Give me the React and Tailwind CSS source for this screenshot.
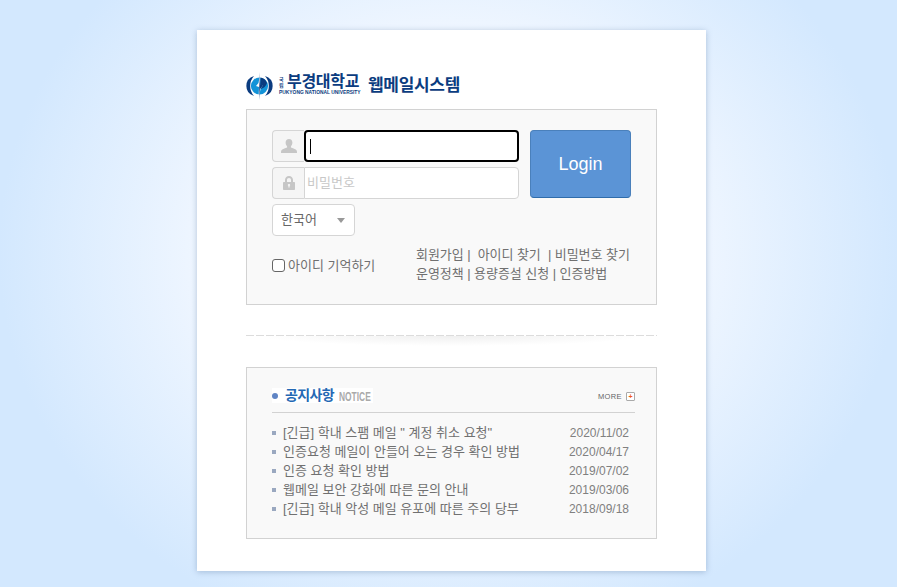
const KR = "font-['Liberation_Sans','Noto_Sans_CJK_KR',sans-serif]";

const notices = [
  { title: '[긴급] 학내 스팸 메일 " 계정 취소 요청"', date: "2020/11/02" },
  { title: "인증요청 메일이 안들어 오는 경우 확인 방법", date: "2020/04/17" },
  { title: "인증 요청 확인 방법", date: "2019/07/02" },
  { title: "웹메일 보안 강화에 따른 문의 안내", date: "2019/03/06" },
  { title: "[긴급] 학내 악성 메일 유포에 따른 주의 당부", date: "2018/09/18" },
];

// university emblem
const Logo = () => (
  <svg width="29" height="28" viewBox="0 0 29 28" className="-ml-px shrink-0">
    <path d="M9 4 A11 10.5 0 0 0 9 24 A15 15 0 0 1 9 4Z" fill="#0b3c80" />
    <path d="M20 4 A11 10.5 0 0 1 20 24 A15 15 0 0 0 20 4Z" fill="#0b3c80" />
    <circle cx="14.5" cy="14" r="8.6" fill="#1293d8" />
    <path d="M15.5 0 L13.5 11 L11 14 L14 15 L13.5 28 L15.5 17 L18 13.5 L15 12.5Z" fill="#fff" />
    <path d="M14.5 0 L15 12 L18 13.5 L15 17 L14.5 28 L14.2 15.5 L14.5 10Z" fill="#0b3c80" />
    <path d="M15.2 12.6 L18 13.5 L15.4 17 A8.6 8.6 0 0 0 22 11 A8.6 8.6 0 0 0 15.6 5.5Z" fill="#0b3c80" />
  </svg>
);

const UserIcon = () => (
  <svg width="16" height="14" viewBox="0 0 16 14" fill="#c6c6c6">
    <path d="M8 0c2.2 0 3.4 1.6 3.4 3.6 0 1.6-.7 3-1.5 3.8v1.2c1.6.6 5.1 1.5 5.8 2.8.2.5.3 1.5.3 2.6H0c0-1.100.1-2.100.3-2.600.7-1.300 4.200-2.200 5.800-2.800V7.400C5.300 6.600 4.600 5.200 4.600 3.600 4.600 1.600 5.800 0 8 0Z" />
  </svg>
);

const LockIcon = () => (
  <svg width="12" height="14" viewBox="0 0 12 14" fill="#c6c6c6">
    <path d="M6 0C3.500 0 2 1.700 2 4v2H.8C.3 6 0 6.300 0 6.800v6.400c0 .5.300.8.800.8h10.400c.5 0 .8-.3.800-.8V6.800c0-.5-.3-.8-.8-.8H10V4c0-2.300-1.500-4-4-4Zm0 2c1.300 0 2 .8 2 2.100V6H4V4.100C4 2.800 4.700 2 6 2ZM6 8c.7 0 1.200.5 1.200 1.100 0 .4-.2.800-.6 1v1.400H5.400v-1.400c-.4-.2-.6-.6-.6-1C4.800 8.500 5.300 8 6 8Z" />
  </svg>
);

const App = () => {
  return (
    <div className={`${KR} h-screen overflow-hidden bg-[radial-gradient(ellipse_450px_400px_at_50%_43%,#ffffff_0%,#eff6ff_55%,#d3e8fe_100%)] pt-[30px]`}>
      <div className="ml-[197px] h-[541px] w-[509px] bg-white px-[49px] pt-[42px] shadow-[0_1px_6px_rgba(90,120,160,0.4)]">
        {/* Logo */}
        <div className="flex h-[37px] items-start">
          <Logo />
          <div className="ml-[5px] flex w-[88px] flex-col pt-[2px]">
            <div className="flex items-center leading-none">
              <div className="flex w-[8px] flex-col text-[5px] font-bold leading-[6px] text-[#0b3c80]">
                <span>국</span>
                <span>립</span>
              </div>
              <span className="whitespace-nowrap text-[16px] font-bold leading-[16px] tracking-[-0.3px] text-[#0b3c80]">부경대학교</span>
            </div>
            <span className="whitespace-nowrap text-[4.9px] font-bold leading-[6px] text-[#0b3c80]">PUKYONG NATIONAL UNIVERSITY</span>
          </div>
          <span className="ml-[1px] mt-[2px] whitespace-nowrap text-[17px] font-bold leading-[24px] tracking-[-0.3px] text-[#0b3c80]">웹메일시스템</span>
        </div>

        {/* Login box */}
        <div className="h-[196px] w-[411px] border border-[#d2d2d2] bg-[#f9f9f9] px-[25px] pt-[20px]">
          <div className="flex gap-[11px]">
            <div className="flex w-[247px] flex-col gap-[5px]">
              <div className="flex h-[32px]">
                <div className="flex w-[32px] items-center justify-center rounded-l-[4px] border border-r-0 border-[#d5d5d5] bg-[#f5f5f5]">
                  <UserIcon />
                </div>
                <div className="flex flex-1 items-center rounded-[4px] border-2 border-black bg-white pl-[4px]">
                  <span className="h-[15px] w-px bg-black" />
                </div>
              </div>
              <div className="flex h-[32px]">
                <div className="flex w-[32px] items-center justify-center rounded-l-[4px] border border-r-0 border-[#d5d5d5] bg-[#f5f5f5]">
                  <LockIcon />
                </div>
                <div className="flex flex-1 items-center rounded-r-[4px] border border-[#d5d5d5] bg-white pl-[2px] text-[13px] text-[#c8c8c8]">
                  비밀번호
                </div>
              </div>
            </div>
            <button className="flex h-[68px] w-[101px] items-center justify-center rounded-[4px] border border-[#4a80bb] border-b-[#2f6cab] bg-[#5b94d6] text-[18px] text-white">
              Login
            </button>
          </div>

          <div className="mt-[5px] flex h-[32px] w-[83px] items-center justify-between rounded-[4px] border border-[#d5d5d5] bg-white pl-[8px] pr-[9px] text-[13px] text-[#666]">
            <span>한국어</span>
            <span className="h-0 w-0 border-x-[4px] border-t-[5px] border-x-transparent border-t-[#999]" />
          </div>

          <div className="mt-[9px] flex text-[13px] text-[#707070]">
            <div className="flex w-[144px] items-center pt-[3px]">
              <span className="h-[13px] w-[13px] rounded-[3px] border border-[#666] bg-white" />
              <span className="ml-[3px] whitespace-nowrap">아이디 기억하기</span>
            </div>
            <div className="whitespace-nowrap leading-[19px] tracking-[-0.05px]">
              <div>회원가입 |&nbsp; 아이디 찾기 &nbsp;| 비밀번호 찾기</div>
              <div>운영정책 | 용량증설 신청 | 인증방법</div>
            </div>
          </div>
        </div>

        {/* Divider with soft shadow */}
        <div className="mt-[30px] h-px w-[411px] bg-[repeating-linear-gradient(90deg,#dcdcdc_0,#dcdcdc_8px,transparent_8px,transparent_10px)]" />
        <div className="mx-auto h-[10px] w-[380px] bg-[radial-gradient(ellipse_50%_100%_at_50%_0%,#f0f0f0_0%,#ffffff_100%)]" />

        {/* Notice box */}
        <div className="mt-[21px] h-[172px] w-[411px] border border-[#d2d2d2] bg-[#f9f9f9] pl-[25px] pr-[21px] pt-[20px]">
          <div className="flex h-[25px] items-start justify-between border-b border-[#d2d2d2]">
            <div className="flex h-[15px] w-[101px] items-center whitespace-nowrap bg-white">
              <span className="h-[6px] w-[6px] shrink-0 rounded-full bg-[#5f84c4]" />
              <span className="ml-[7px] shrink-0 text-[14px] font-bold tracking-[-0.6px] text-[#2468b4]">공지사항</span>
              <span className="ml-[5px] mt-[2px] origin-left scale-x-[0.7] text-[12px] font-bold text-[#aaaaaa]">NOTICE</span>
            </div>
            <div className="mt-[3px] flex items-center">
              <span className="text-[7.5px] tracking-[0.4px] text-[#666]">MORE</span>
              <span className="ml-[4px] flex h-[9px] w-[9px] items-center justify-center rounded-[1px] border border-[#aaa] bg-white text-[7px] font-bold leading-none text-[#f05a1a]">+</span>
            </div>
          </div>

          <ul className="mt-[10px]">
            {notices.map((n) => (
              <li key={n.date} className="flex h-[19px] items-center text-[13px] text-[#707070]">
                <span className="h-[4px] w-[4px] bg-[#9aa8c0]" />
                <span className="ml-[7px] flex-1 whitespace-nowrap">{n.title}</span>
                <span className="mr-[6px] text-[12px] text-[#808080]">{n.date}</span>
              </li>
            ))}
          </ul>
        </div>
      </div>
    </div>
  );
};

export default App;
